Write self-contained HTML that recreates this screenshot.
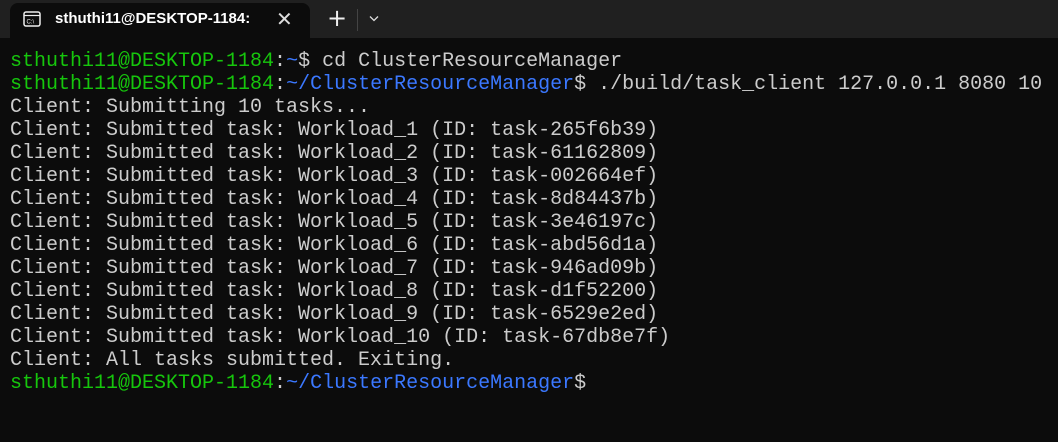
<!DOCTYPE html>
<html><head><meta charset="utf-8"><style>
html,body{margin:0;padding:0;width:1058px;height:442px;background:#0c0c0c;overflow:hidden}
.bar{position:absolute;left:0;top:0;width:1058px;height:38px;background:#202020}
.tab{position:absolute;left:10px;top:3px;width:300px;height:35px;background:#0c0c0c;border-radius:8px 8px 0 0}
.title{position:absolute;left:55px;top:10px;font:bold 15px "Liberation Sans",sans-serif;color:#fff}
.x{position:absolute;left:276px;top:7px;color:#ddd;font:20px "DejaVu Sans",sans-serif}
.plus{position:absolute;left:327px;top:4px;color:#eee;font:24px "DejaVu Sans",sans-serif}
.sep{position:absolute;left:357px;top:9px;width:1px;height:22px;background:#444}
.term{position:absolute;left:10px;top:50px;font-family:"Liberation Mono",monospace;font-size:20px;color:#cccccc}
.term div{height:23px;line-height:23px;white-space:pre}
.g{color:#16c60c}.b{color:#3b78ff}
</style></head><body>
<div class="bar"></div>
<div class="tab"></div>
<svg style="position:absolute;left:23px;top:11px" width="18" height="16" viewBox="0 0 18 16"><rect x="1" y="1" width="16" height="14" rx="2" fill="none" stroke="#eee" stroke-width="1.5"/><line x1="1" y1="4.5" x2="17" y2="4.5" stroke="#eee" stroke-width="1.2"/><text x="3.5" y="12.5" font-size="6" fill="#eee" font-family="Liberation Sans">C:\</text></svg>
<div class="title">sthuthi11@DESKTOP-1184:</div>
<div class="x">✕</div>
<div class="plus">+</div>
<div class="sep"></div>
<svg style="position:absolute;left:369px;top:15px" width="10" height="7" viewBox="0 0 10 7"><path d="M1 1.5L5 5.5L9 1.5" stroke="#ddd" stroke-width="1.3" fill="none"/></svg>
<div class="term"><div><span class="g">sthuthi11@DESKTOP-1184</span>:<span class="b">~</span>$ cd ClusterResourceManager</div><div><span class="g">sthuthi11@DESKTOP-1184</span>:<span class="b">~/ClusterResourceManager</span>$ ./build/task_client 127.0.0.1 8080 10</div><div>Client: Submitting 10 tasks...</div><div>Client: Submitted task: Workload_1 (ID: task-265f6b39)</div><div>Client: Submitted task: Workload_2 (ID: task-61162809)</div><div>Client: Submitted task: Workload_3 (ID: task-002664ef)</div><div>Client: Submitted task: Workload_4 (ID: task-8d84437b)</div><div>Client: Submitted task: Workload_5 (ID: task-3e46197c)</div><div>Client: Submitted task: Workload_6 (ID: task-abd56d1a)</div><div>Client: Submitted task: Workload_7 (ID: task-946ad09b)</div><div>Client: Submitted task: Workload_8 (ID: task-d1f52200)</div><div>Client: Submitted task: Workload_9 (ID: task-6529e2ed)</div><div>Client: Submitted task: Workload_10 (ID: task-67db8e7f)</div><div>Client: All tasks submitted. Exiting.</div><div><span class="g">sthuthi11@DESKTOP-1184</span>:<span class="b">~/ClusterResourceManager</span>$</div></div>
</body></html>
